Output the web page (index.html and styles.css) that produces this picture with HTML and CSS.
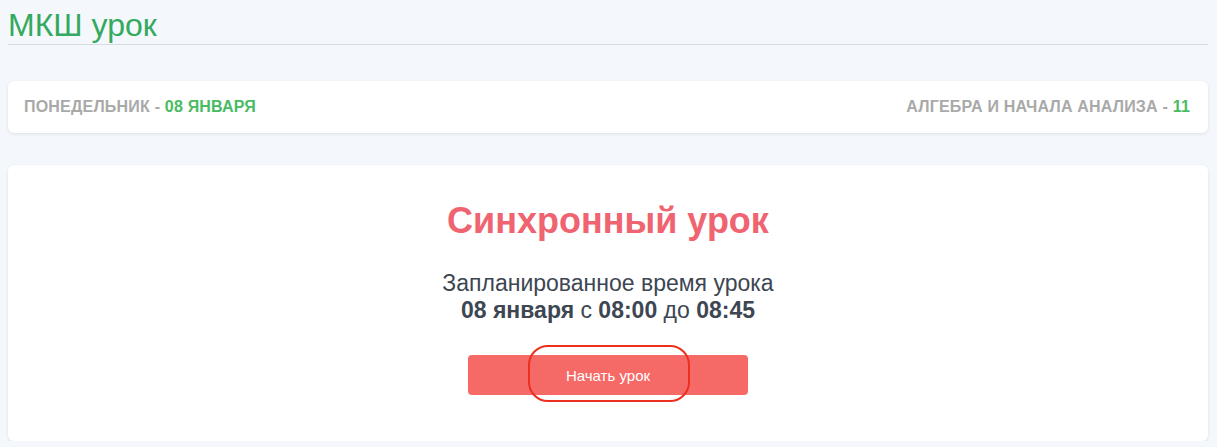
FILE: index.html
```html
<!DOCTYPE html>
<html lang="ru">
<head>
<meta charset="utf-8">
<link rel="stylesheet" href="styles.css">
</head>
<body>
<header class="page-head">
  <h1 class="page-title">МКШ урок</h1>
</header>
<section class="card info-card">
  <div class="info-left">ПОНЕДЕЛЬНИК - <span class="accent">08 ЯНВАРЯ</span></div>
  <div class="info-right">АЛГЕБРА И НАЧАЛА АНАЛИЗА - <span class="accent">11</span></div>
</section>
<section class="card lesson-card">
  <h2 class="lesson-title">Синхронный урок</h2>
  <p class="lesson-time">Запланированное время урока<br><b>08 января</b> с <b>08:00</b> до <b>08:45</b></p>
  <div class="btn-wrap">
    <button class="start-btn">Начать урок</button>
    <span class="mark"></span>
  </div>
</section>
</body>
</html>
```
FILE: styles.css
```css
html, body { margin: 0; padding: 0; }
body {
  background: #f4f8fc;
  font-family: "Liberation Sans", Arial, sans-serif;
  padding: 0 9px 0 8px;
}
.page-head {
  border-bottom: 1px solid #d6dbe0;
  padding: 9px 0 3px;
}
.page-title {
  margin: 0;
  font-weight: 400;
  font-size: 32px;
  line-height: 32px;
  color: #34a960;
}
.card {
  background: #fff;
  border-radius: 6px;
  box-shadow: 0 1px 3px rgba(40, 60, 90, 0.12);
}
.info-card {
  margin-top: 36px;
  height: 52px;
  box-sizing: border-box;
  padding: 0 18px 0 16px;
  display: flex;
  align-items: center;
  justify-content: space-between;
  font-size: 16px;
  letter-spacing: 0.2px;
  font-weight: 700;
  color: #a9a9a9;
}
.accent { color: #49bb63; }
.lesson-card {
  margin-top: 32px;
  height: 276px;
  box-sizing: border-box;
  padding-top: 35px;
  display: flex;
  flex-direction: column;
  align-items: center;
}
.lesson-title {
  margin: 0;
  font-size: 36px;
  line-height: 42px;
  font-weight: 700;
  color: #ef6470;
}
.lesson-time {
  margin: 28px 0 0;
  font-size: 23px;
  line-height: 27px;
  color: #3d4652;
  text-align: center;
}
.lesson-time b { font-weight: 700; }
.btn-wrap {
  position: relative;
  margin-top: 31px;
}
.start-btn {
  display: block;
  width: 280px;
  height: 40px;
  border: 0;
  border-radius: 4px;
  background: #f56a67;
  color: #fff;
  font-family: "Liberation Sans", Arial, sans-serif;
  font-size: 15px;
}
.mark {
  position: absolute;
  left: 60px;
  top: -10px;
  width: 162px;
  height: 57px;
  box-sizing: border-box;
  border: 2.5px solid #ec2f1e;
  border-radius: 20px;
  pointer-events: none;
}
```
